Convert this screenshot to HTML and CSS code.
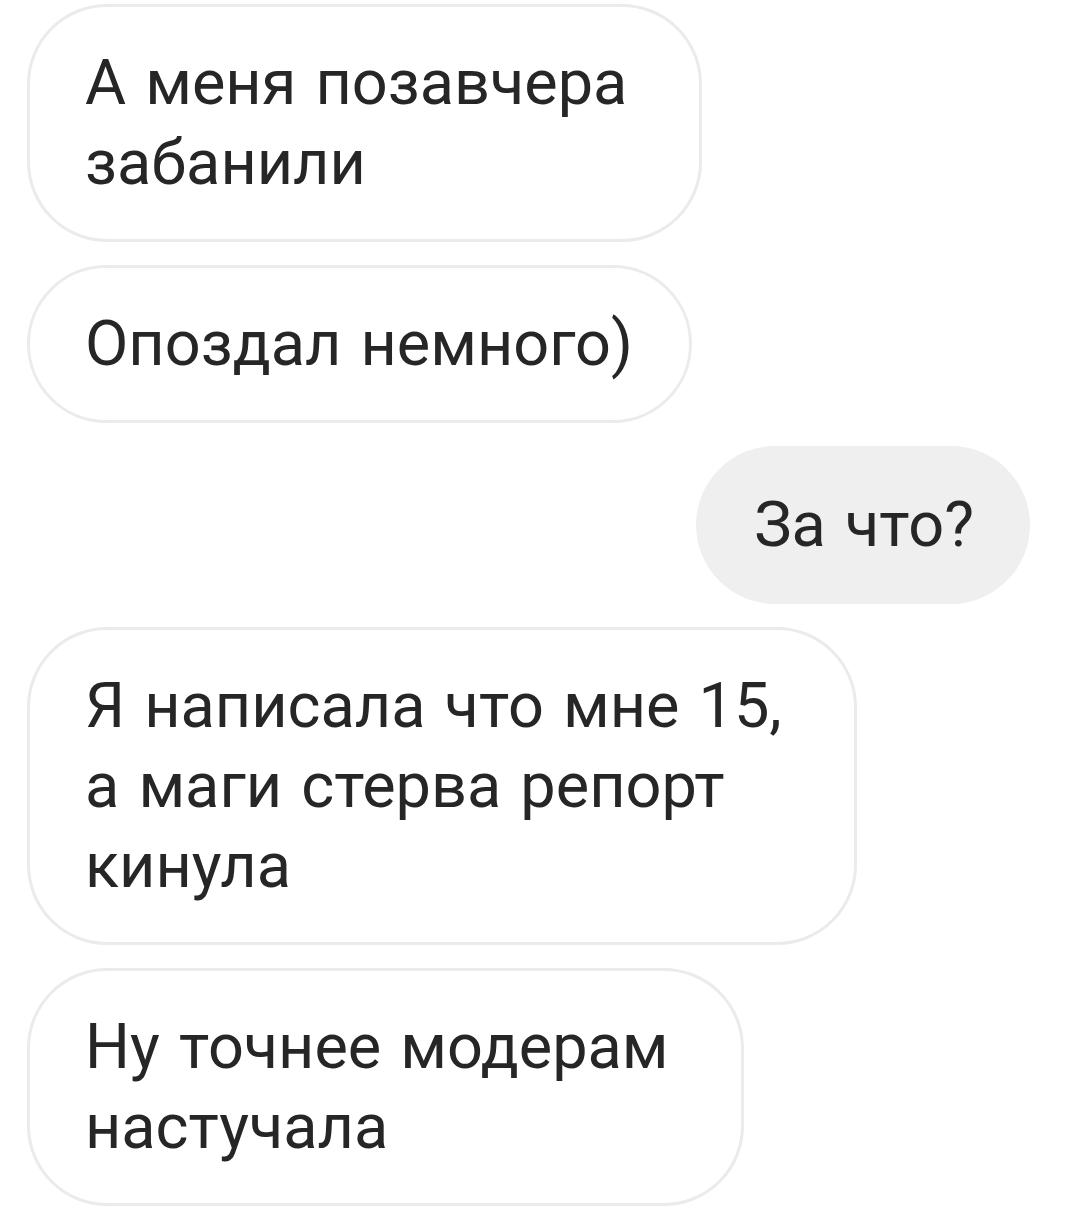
FILE: index.html
```html
<!DOCTYPE html>
<html lang="ru">
<head>
  <meta charset="UTF-8">
  <title>Сообщения</title>
  <link rel="stylesheet" href="styles.css">
</head>
<body>

<div class="chat">
  <div class="msg in">А меня позавчера<br>забанили</div>
  <div class="msg in short">Опоздал немного)</div>
  <div class="msg out">За что?</div>
  <div class="msg in">Я написала что мне 15,<br>а маги стерва репорт<br>кинула</div>
  <div class="msg in">Ну точнее модерам<br>настучала</div>
</div>

</body>
</html>
```

FILE: styles.css
```css
body { margin: 0; background: #fff; font-family: Roboto, "Noto Sans", sans-serif; color: #262626; }
.chat { display: flex; flex-direction: column; align-items: flex-start; gap: 23px; padding: 4px 50px 0 27px; }
.msg { font-size: 63px; line-height: 80px; word-spacing: 3.5px; padding: 36px 72px 36px 55px; border-radius: 80px; border: 3px solid #ebebeb; background: #fff; white-space: nowrap; }
.msg.short { padding-right: 56px; }
.msg.out { align-self: flex-end; background: #efefef; border-color: #efefef; padding-right: 53px; }
```
